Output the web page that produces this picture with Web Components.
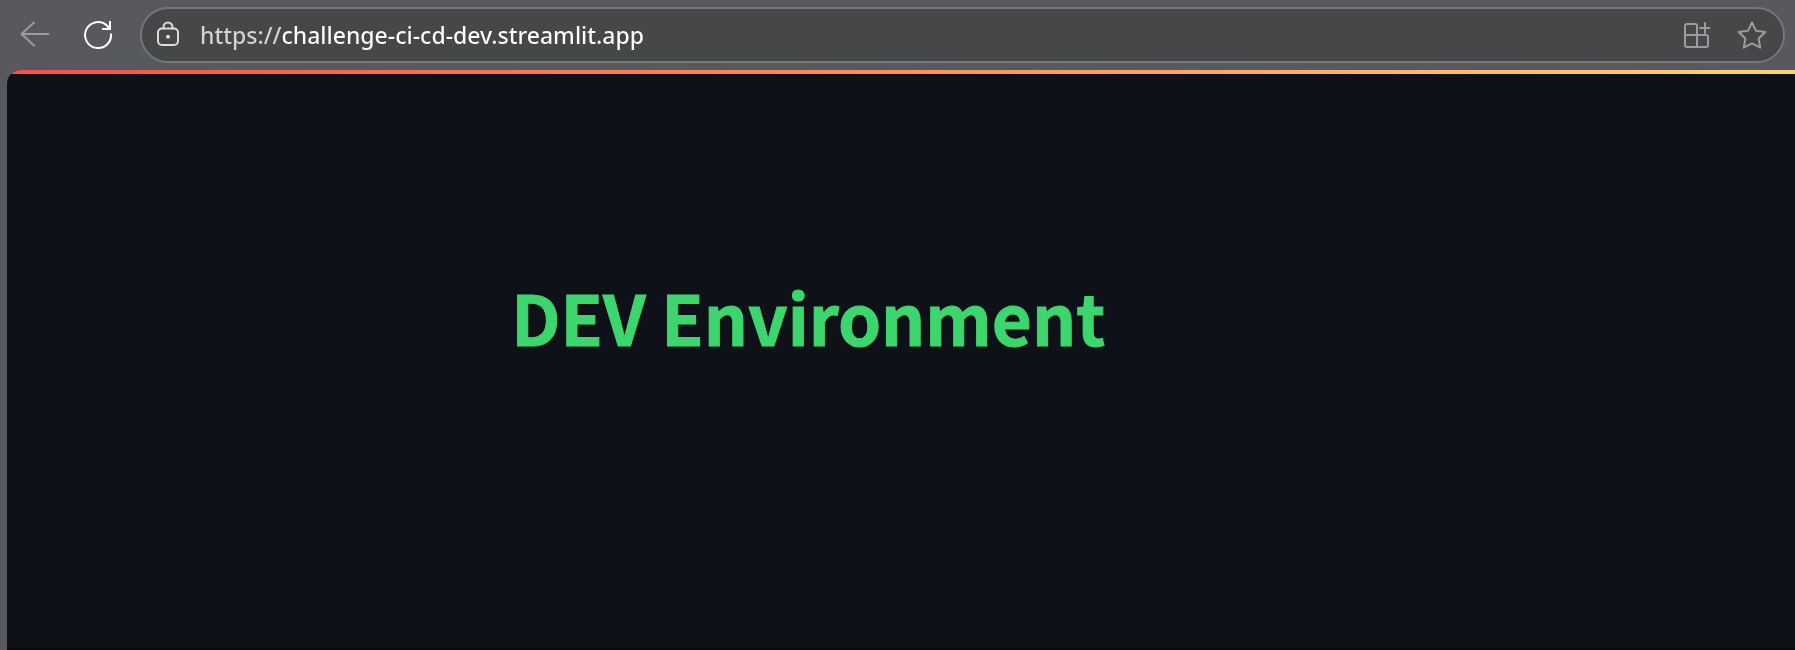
<!DOCTYPE html>
<html lang="en">
<head>
<meta charset="utf-8">
<title>DEV Environment</title>
<style>
html, body { height: 100%; margin: 0; }
body { background: #58595e; font-family: "Noto Sans", "Open Sans", sans-serif; }
</style>
</head>
<body>
<browser-window>
  <browser-toolbar slot="toolbar" url="https://challenge-ci-cd-dev.streamlit.app"></browser-toolbar>
  <app-page><span>DEV Environment</span></app-page>
</browser-window>
<script>
class BrowserWindow extends HTMLElement {
  constructor() {
    super();
    this.attachShadow({ mode: "open" }).innerHTML = `
      <style>
        :host { display: flex; flex-direction: column; height: 100%; box-sizing: border-box; padding-left: 7px; }
        main { flex: 1; display: flex; }
        ::slotted(app-page) { flex: 1; }
      </style>
      <slot name="toolbar"></slot>
      <main><slot></slot></main>`;
  }
}

class IconButton extends HTMLElement {
  constructor() {
    super();
    this.attachShadow({ mode: "open" }).innerHTML = `
      <style>
        :host { display: block; color: #fff; }
        button { display: block; border: 0; padding: 0; background: none; color: inherit; }
        ::slotted(svg) { display: block; width: 32px; height: 32px; fill: none; stroke: currentColor; stroke-width: 2; stroke-linecap: round; stroke-linejoin: round; }
      </style>
      <button type="button"><slot></slot></button>`;
  }
  connectedCallback() {
    this.shadowRoot.querySelector("button").setAttribute("aria-label", this.getAttribute("label"));
  }
}

class BrowserToolbar extends HTMLElement {
  constructor() {
    super();
    this.attachShadow({ mode: "open" }).innerHTML = `
      <style>
        :host { display: flex; align-items: center; height: 70px; box-sizing: border-box; padding: 0 10px 0 12px; gap: 31px; }
        .bar { flex: 1; min-width: 0; display: flex; align-items: center; height: 56px; box-sizing: border-box; margin-left: -5px; padding: 0 15px 0 10px; border: 2px solid #75767a; border-radius: 28px; background: #464749; }
        .dim { color: #9a9b9e; }
        .info { color: #dcdcdd; }
        .star { margin-left: 24px; }
        input { flex: 1; min-width: 0; height: 40px; margin-left: 16px; padding: 0; border: 0; outline: 0; font: 500 23px/40px "Noto Sans", "Open Sans", sans-serif;
          background: linear-gradient(90deg, #d2d3d5 80px, #fff 80px); background-clip: text; -webkit-background-clip: text; color: transparent; }
      </style>
      <icon-button class="dim" label="Back"><svg viewBox="0 0 32 32"><path d="M15 3.500 2.500 15l12.500 11.500M2.500 15h27" /></svg></icon-button>
      <icon-button label="Refresh"><svg viewBox="0 0 32 32"><path stroke-linecap="butt" stroke-linejoin="miter" d="M29 14.500A13 13 0 1 1 25.200 6.800L27.500 9.500M28 2v8h-8" /></svg></icon-button>
      <div class="bar">
        <icon-button class="info" label="View site information"><svg viewBox="0 0 32 32"><rect x="6" y="9.500" width="20" height="16.500" rx="4"/><path d="M11.500 9.500V8a4.500 4.500 0 0 1 9 0V9.500"/><circle cx="16" cy="17.800" r="1" fill="currentColor"/></svg></icon-button>
        <input type="text" aria-label="Address" spellcheck="false">
        <icon-button class="dim" label="App available"><svg viewBox="0 0 32 32"><path d="M17 16V7a2 2 0 0 0-2-2H7a2 2 0 0 0-2 2v19a2 2 0 0 0 2 2h19a2 2 0 0 0 2-2v-8a2 2 0 0 0-2-2H5M17 16v12M25 4v10M20 9h9.500"/></svg></icon-button>
        <icon-button class="dim star" label="Add to favorites"><svg viewBox="0 0 32 32"><path d="M16 3.500 20 11.700 29.300 13 22.600 19.500 24.200 28.700 16 24.400 7.800 28.700 9.400 19.500 2.700 13 12 11.700Z"/></svg></icon-button>
      </div>`;
  }
  connectedCallback() {
    this.shadowRoot.querySelector("input").value = this.getAttribute("url");
  }
}

class AppPage extends HTMLElement {
  constructor() {
    super();
    this.attachShadow({ mode: "open" }).innerHTML = `
      <style>
        :host { display: flex; flex-direction: column; box-sizing: border-box; overflow: hidden; border-radius: 14px 0 0 0; border-bottom: 2px solid #090b0f; background: #0e1117; }
        .strip { height: 4px; background: linear-gradient(90deg, #ff4b4b, #ffd36b); }
        .content { padding: 198px 16px 0 28.200%; }
        h1 { margin: 0; color: #3dd56d; font: 700 69px/88px "Noto Sans CJK SC", sans-serif; -webkit-text-stroke: 1px currentColor; white-space: nowrap; }
      </style>
      <div class="strip"></div>
      <div class="content"><h1><slot></slot></h1></div>`;
  }
}

customElements.define("icon-button", IconButton);
customElements.define("browser-toolbar", BrowserToolbar);
customElements.define("app-page", AppPage);
customElements.define("browser-window", BrowserWindow);
</script>
</body>
</html>
